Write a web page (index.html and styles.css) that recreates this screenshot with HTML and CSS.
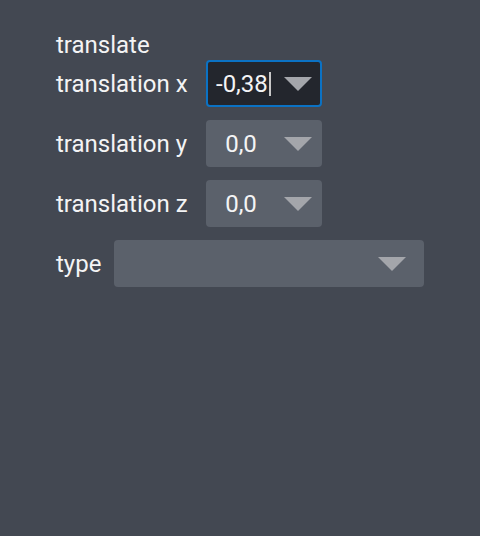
FILE: index.html
```html
<!DOCTYPE html>
<html lang="en">
<head>
  <meta charset="UTF-8">
  <title>translate</title>
  <link rel="stylesheet" href="styles.css">
</head>
<body>
<div class="panel">
  <div class="title">translate</div>

  <div class="row">
    <label class="label wide">translation x</label>
    <div class="combo focused">
      <span class="value">-0,38<span class="caret"></span></span>
      <span class="arrow"></span>
    </div>
  </div>

  <div class="row">
    <label class="label wide">translation y</label>
    <div class="combo">
      <span class="value">0,0</span>
      <span class="arrow"></span>
    </div>
  </div>

  <div class="row">
    <label class="label wide">translation z</label>
    <div class="combo">
      <span class="value">0,0</span>
      <span class="arrow"></span>
    </div>
  </div>

  <div class="row">
    <label class="label">type</label>
    <div class="combo long">
      <span class="value"></span>
      <span class="arrow"></span>
    </div>
  </div>
</div>
</body>
</html>
```

FILE: styles.css
```css
html, body {
  margin: 0;
  height: 100%;
  background: #434852;
}
body {
  font-family: Roboto, "Noto Sans", sans-serif;
  font-size: 24px;
  color: #f4f4f5;
}
.panel {
  padding: 30px 56px;
}
.title {
  line-height: 30px;
}
.row {
  display: flex;
  align-items: center;
  margin-bottom: 13px;
}
.label {
  margin-right: 13px;
}
.label.wide {
  width: 137px;
}
.combo {
  display: flex;
  align-items: center;
  box-sizing: border-box;
  width: 116px;
  height: 47px;
  background: #5b616b;
  border: 2px solid transparent;
  border-radius: 4px;
}
.combo.long {
  width: 310px;
}
.value {
  flex: 1;
  text-align: center;
  padding-right: 10px;
}
.focused {
  background: #23262d;
  border-color: #0b72c4;
}
.focused .value {
  text-align: left;
  padding: 0 0 0 8px;
}
.caret {
  display: inline-block;
  width: 2px;
  height: 24px;
  margin-left: 1px;
  vertical-align: -4px;
  background: #c8c8c8;
}
.arrow {
  width: 0;
  height: 0;
  margin-right: 8px;
  border-left: 14px solid transparent;
  border-right: 14px solid transparent;
  border-top: 14px solid #a4a6ab;
}
.long .arrow {
  margin-right: 16px;
}
```
